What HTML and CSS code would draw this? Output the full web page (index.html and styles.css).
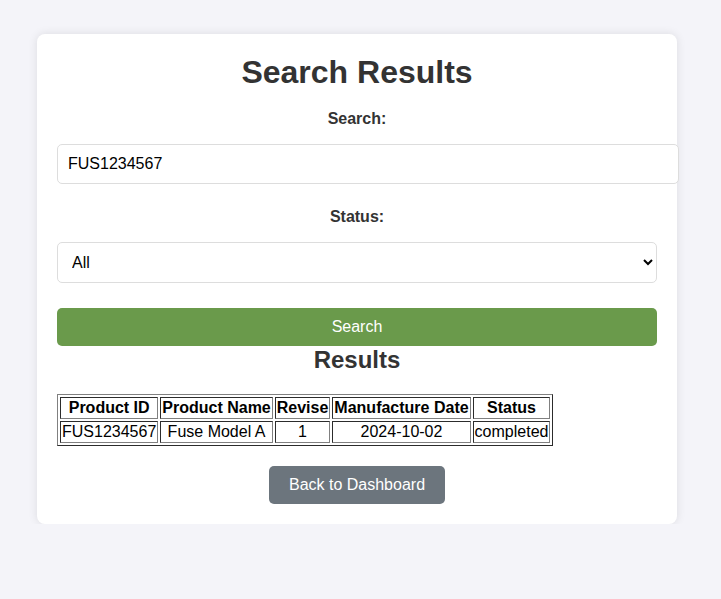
FILE: index.html
```html
<!DOCTYPE html>
<html lang="en">
<head>
<meta charset="utf-8">
<title>Search Results</title>
<link rel="stylesheet" href="styles.css">
</head>
<body>
<div class="card">
  <h1 class="title">Search Results</h1>
  <form class="search-form">
    <label class="field-label" for="q">Search:</label>
    <input class="text-input" id="q" type="text" value="FUS1234567">
    <label class="field-label" for="status">Status:</label>
    <select class="select-input" id="status">
      <option>All</option>
      <option>completed</option>
      <option>pending</option>
    </select>
    <button class="btn btn-search" type="button">Search</button>
  </form>
  <h2 class="subtitle">Results</h2>
  <table class="results">
    <thead>
      <tr>
        <th>Product ID</th>
        <th>Product Name</th>
        <th>Revise</th>
        <th>Manufacture Date</th>
        <th>Status</th>
      </tr>
    </thead>
    <tbody>
      <tr>
        <td>FUS1234567</td>
        <td>Fuse Model A</td>
        <td>1</td>
        <td>2024-10-02</td>
        <td>completed</td>
      </tr>
    </tbody>
  </table>
  <div class="back-row">
    <a class="btn btn-back" href="#">Back to Dashboard</a>
  </div>
</div>
</body>
</html>
```

FILE: styles.css
```css
html, body {
  margin: 0;
  padding: 0;
}

body {
  background: #f4f4f9;
  font-family: "Liberation Sans", Arial, sans-serif;
  color: #333;
  padding: 34px 0 0 37px;
}

.card {
  width: 600px;
  padding: 20px;
  background: #fff;
  border-radius: 8px;
  box-shadow: 0 0 10px rgba(0, 0, 0, 0.1);
}

.title {
  margin: 0 0 19px;
  font-size: 32px;
  font-weight: bold;
  text-align: center;
  color: #333;
}

.search-form {
  margin: 0;
}

.field-label {
  display: block;
  text-align: center;
  font-weight: bold;
  font-size: 16px;
  margin-bottom: 16px;
  color: #333;
}

.text-input {
  display: block;
  width: 100%;
  padding: 10px;
  font-family: "Liberation Sans", Arial, sans-serif;
  font-size: 16px;
  color: #000;
  border: 1px solid #ddd;
  border-radius: 5px;
  margin: 0 0 24px;
  box-sizing: content-box;
  height: 18px;
}

.select-input {
  display: block;
  width: 100%;
  padding: 10px;
  font-family: "Liberation Sans", Arial, sans-serif;
  font-size: 16px;
  color: #000;
  background: #fff;
  border: 1px solid #ddd;
  border-radius: 5px;
  margin: 0 0 25px;
  height: 41px;
}

.btn {
  display: block;
  font-family: "Liberation Sans", Arial, sans-serif;
  font-size: 16px;
  color: #fff;
  border: none;
  border-radius: 5px;
  text-decoration: none;
  text-align: center;
  box-sizing: border-box;
}

.btn-search {
  width: 100%;
  height: 38px;
  padding: 0;
  background: #6a9a4b;
}

.subtitle {
  margin: 0 0 20px;
  font-size: 24px;
  font-weight: bold;
  text-align: center;
  color: #333;
}

.results {
  border: 1px outset #808080;
  border-spacing: 2px;
  font-size: 16px;
  color: #000;
}

.results th,
.results td {
  border: 1px inset #808080;
  padding: 1px;
  text-align: center;
}

.results th {
  font-weight: bold;
}

.back-row {
  display: flex;
  justify-content: center;
  margin-top: 20px;
}

.btn-back {
  padding: 10px 20px;
  line-height: 18px;
  background: #6c757d;
}
```
